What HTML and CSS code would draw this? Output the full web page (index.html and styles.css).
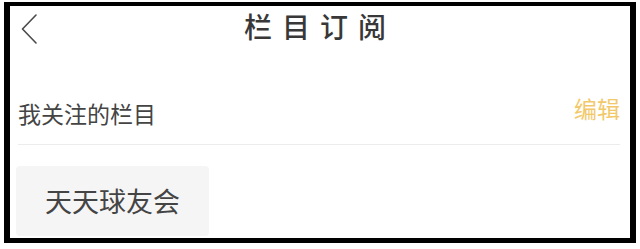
FILE: index.html
```html
<!DOCTYPE html>
<html lang="zh-CN">
<head>
<meta charset="utf-8">
<title>栏目订阅</title>
<link rel="stylesheet" href="styles.css">
</head>
<body>
<div class="frame">
  <header class="topbar">
    <div class="back">
      <svg width="18" height="30" viewBox="0 0 18 30" aria-hidden="true">
        <polyline points="15,1 1.5,15 15,29" fill="none" stroke="#4a4a4a" stroke-width="1.6" stroke-linecap="round" stroke-linejoin="round"/>
      </svg>
    </div>
    <h1 class="title">栏目订阅</h1>
    <div class="spacer"></div>
  </header>
  <div class="section-head">
    <span class="section-title">我关注的栏目</span>
    <span class="edit">编辑</span>
  </div>
  <div class="chips">
    <span class="chip">天天球友会</span>
  </div>
</div>
</body>
</html>
```
FILE: styles.css
```css
html, body {
  margin: 0;
  padding: 0;
  background: #ffffff;
}
body {
  font-family: "Noto Sans CJK SC", "Noto Sans", sans-serif;
  width: 640px;
  height: 249px;
  overflow: hidden;
}
.frame {
  margin: 2px 4px 0 4px;
  border-style: solid;
  border-color: #000;
  border-width: 4px 6px 5px 6px;
  background: #fff;
  height: 232px;
  box-sizing: content-box;
}
.topbar {
  display: grid;
  grid-template-columns: 1fr auto 1fr;
  align-items: center;
  height: 40px;
}
.back {
  padding-left: 11px;
  display: flex;
  align-items: center;
  padding-top: 6px;
}
.back svg {
  display: block;
}
.title {
  margin: 0;
  font-size: 28px;
  line-height: 40px;
  font-weight: 500;
  color: #383838;
  letter-spacing: 10px;
  white-space: nowrap;
}
.section-head {
  display: flex;
  justify-content: space-between;
  align-items: flex-end;
  height: 82px;
  padding-bottom: 16px;
  margin: 0 10px 0 8px;
  border-bottom: 1px solid #ececec;
}
.section-title {
  font-size: 23px;
  line-height: 30px;
  color: #444;
}
.edit {
  font-size: 23px;
  line-height: 30px;
  color: #f2c96a;
  margin-bottom: 5px;
}
.chips {
  display: flex;
  padding: 21px 0 0 6px;
}
.chip {
  display: inline-block;
  background: #f5f5f5;
  border-radius: 4px;
  height: 70px;
  line-height: 70px;
  padding: 0 29px;
  font-size: 27px;
  color: #444;
}
```
